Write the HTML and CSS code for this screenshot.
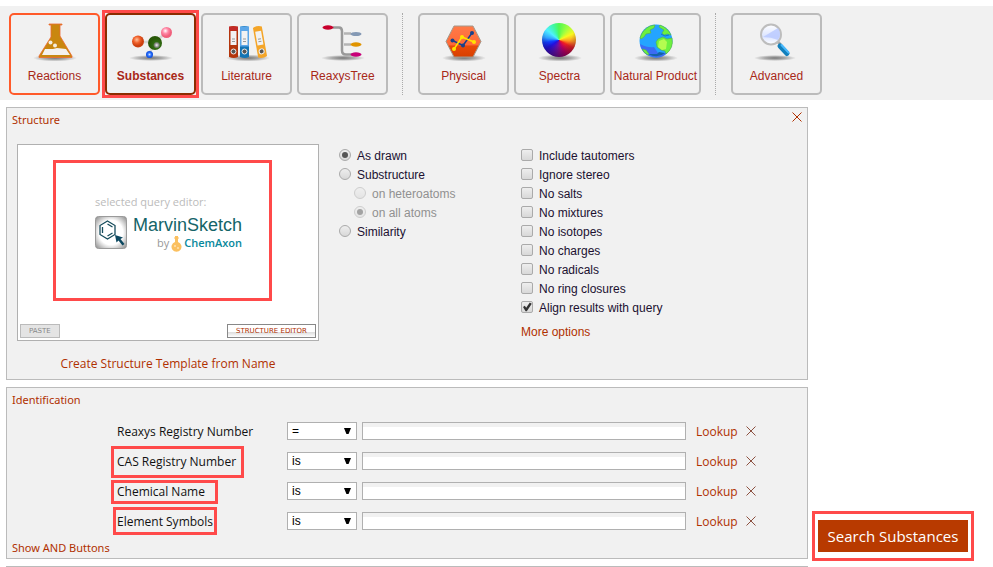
FILE: index.html
```html
<!DOCTYPE html>
<html lang="en">
<head>
<meta charset="utf-8">
<title>Substances</title>
<link rel="stylesheet" href="styles.css">
</head>
<body>
<svg class="defs" width="0" height="0" aria-hidden="true">
  <defs>
    <radialGradient id="shadow"><stop offset="0" stop-color="#777"/><stop offset=".5" stop-color="#aaa"/><stop offset="1" stop-color="#f1f1f1"/></radialGradient>
    <radialGradient id="orange" cx=".4" cy=".35"><stop offset="0" stop-color="#ffc09a"/><stop offset=".55" stop-color="#f0602a"/><stop offset="1" stop-color="#cc4010"/></radialGradient>
    <radialGradient id="green" cx=".62" cy=".65"><stop offset="0" stop-color="#f4f4f4"/><stop offset=".3" stop-color="#888"/><stop offset=".5" stop-color="#2f6a10"/><stop offset="1" stop-color="#285808"/></radialGradient>
    <radialGradient id="pink" cx=".4" cy=".35"><stop offset="0" stop-color="#fff"/><stop offset=".5" stop-color="#ff8aa8"/><stop offset="1" stop-color="#f0607c"/></radialGradient>
    <radialGradient id="blue"><stop offset="0" stop-color="#cfe4ff"/><stop offset=".5" stop-color="#2a70ff"/><stop offset="1" stop-color="#0a4ad8"/></radialGradient>
    <linearGradient id="hex" x2="0" y2="1"><stop offset="0" stop-color="#ff7a48"/><stop offset=".6" stop-color="#ff6a38"/><stop offset=".65" stop-color="#e84a08"/><stop offset="1" stop-color="#d84000"/></linearGradient>
    <linearGradient id="lens" x2="0" y2="1"><stop offset="0" stop-color="#fff"/><stop offset=".6" stop-color="#dbe4ff"/><stop offset="1" stop-color="#fff"/></linearGradient>
    <radialGradient id="tile" r=".7"><stop offset=".55" stop-color="#fff"/><stop offset="1" stop-color="#888"/></radialGradient>
  </defs>
</svg>

<nav class="toolbar" aria-label="Query types">
  <button class="tab tab-linked" type="button">
    <svg class="icon" viewBox="0 0 48 42"><ellipse cx="24" cy="37" rx="22" ry="3.5" fill="url(#shadow)"/><path d="M18 3h13v1h-2v11l12 20v1.500H8V35l12-19V4h-2z" fill="#c98710" stroke="#ee6a32" stroke-width=".8"/><path d="M14 28h8l4-1 9 1 4 6H11z" fill="#f4f1ee"/><circle cx="19.500" cy="21.500" r="2" fill="#f6eee0"/><circle cx="24" cy="24.500" r="2" fill="#f6eee0"/></svg>
    <span>Reactions</span>
  </button>
  <button class="tab tab-active" type="button" aria-pressed="true">
    <svg class="icon" viewBox="0 0 48 42"><ellipse cx="24" cy="37" rx="22" ry="3" fill="url(#shadow)"/><path d="M11 21h17L40 11M28 22l-6 11" stroke="#d4d4d4" stroke-width="2.500" fill="none"/><circle cx="11" cy="20.500" r="6" fill="url(#orange)"/><circle cx="28" cy="22" r="7" fill="url(#green)"/><circle cx="39.500" cy="11.500" r="5.500" fill="url(#pink)"/><circle cx="22.500" cy="33.500" r="3.500" fill="url(#blue)"/></svg>
    <span>Substances</span>
  </button>
  <button class="tab" type="button">
    <svg class="icon" viewBox="0 0 48 42"><ellipse cx="25" cy="37" rx="22" ry="3.500" fill="url(#shadow)"/>
      <g><path d="M6 6q4-2 9 0v30q-4 2-9 0z" fill="#b3350c"/><path d="M6 5.500h9v4H6z" fill="#c22a28"/><path d="M7.500 10h6v14h-6z" fill="#f2f2f2"/><path d="M9 18h3M9 20.500h3" stroke="#999"/><circle cx="10.500" cy="30.500" r="2.500" fill="#555" stroke="#eee"/></g>
      <g><path d="M17 6q4-2 9 0v30q-4 2-9 0z" fill="#1374b4"/><path d="M17 5.500h9v20h-9z" fill="#5ba6e8"/><path d="M18.500 10h6v14h-6z" fill="#f2f2f2"/><path d="M20 18h3M20 20.500h3" stroke="#999"/><circle cx="21.500" cy="30.500" r="2.500" fill="#555" stroke="#eee"/></g>
      <g transform="rotate(-10 37 21)"><path d="M32.500 6q4-2 9 0v30q-4 2-9 0z" fill="#f4a528"/><path d="M34 10h6v14h-6z" fill="#f2f2f2"/><path d="M35.500 18h3M35.500 20.500h3" stroke="#999"/><circle cx="37" cy="30.500" r="2.500" fill="#555" stroke="#eee"/></g></svg>
    <span>Literature</span>
  </button>
  <button class="tab" type="button">
    <svg class="icon" viewBox="0 0 48 42"><ellipse cx="24" cy="37" rx="22" ry="3" fill="url(#shadow)"/><path d="M14 6.500h6q3 0 3 4v19q0 4 4 4h6" fill="none" stroke="#999" stroke-width="2.500"/><path d="M25 12.500h7M25 23.500h7" stroke="#b4b4b4" stroke-width="2.500"/><ellipse cx="9" cy="6.500" rx="5.500" ry="2.200" fill="#c8002c"/><ellipse cx="37" cy="13" rx="5.500" ry="2" fill="#8499b4"/><ellipse cx="37" cy="23.500" rx="5.500" ry="2.200" fill="#e09400"/><ellipse cx="37" cy="33.500" rx="5.500" ry="2.200" fill="#c80078"/></svg>
    <span>ReaxysTree</span>
  </button>
  <span class="divider"></span>
  <button class="tab" type="button">
    <svg class="icon" viewBox="0 0 48 42"><ellipse cx="24" cy="37" rx="22" ry="3.500" fill="url(#shadow)"/><path d="M14 5h19l8 15.500L33 36H14L6 20.500z" fill="url(#hex)" stroke="#a4998c"/><path d="M12.500 19.500L23 24.500l9-12.500" fill="none" stroke="#18428c" stroke-width="1.500"/><path d="M14 28l8-12 12 5" fill="none" stroke="#ffe400" stroke-width="1.500"/><g fill="#18428c"><circle cx="12.500" cy="19.500" r="2"/><circle cx="23" cy="24.500" r="2"/><circle cx="32" cy="12" r="2"/></g><g fill="#ffe400"><circle cx="14" cy="28" r="2"/><circle cx="22" cy="16" r="2"/><circle cx="34" cy="21" r="2"/></g></svg>
    <span>Physical</span>
  </button>
  <button class="tab" type="button">
    <span class="icon wheel-icon"><svg viewBox="0 0 48 42"><ellipse cx="24" cy="37" rx="22" ry="3.500" fill="url(#shadow)"/></svg><i class="wheel"></i></span>
    <span>Spectra</span>
  </button>
  <button class="tab" type="button">
    <svg class="icon" viewBox="0 0 48 42"><ellipse cx="24" cy="37" rx="22" ry="3.500" fill="url(#shadow)"/><circle cx="24" cy="20" r="16.500" fill="#24a4ff"/><path d="M8 23q8 4 14 3l4 6h9q-5 5-11 4.500Q10 35 8 23z" fill="#3c6cf4"/><path d="M16 33q10 5 17-1l-6-1-2 2z" fill="#1464a8"/><path d="M8 17q2-8 10-12l5-1-1 3-4 2 1 3-5 1-2 3-3 2zM28 4q8 3 11 10l-4-1-3 1-2-2 2-3-5-3zM26 18l5-2 4 2 5-1q2 10-6 16l-1-3-4-1-4-3-1-5zM10 28l4 1 3 4-1 1q-4-2-6-6z" fill="#6cf040" stroke="#58a83c" stroke-width=".5"/><path d="M27 20l5-2 3 3-1 7-4 1-4-3z" fill="#b4fc50"/><path d="M29 13l4 2 4-1" stroke="#1478c8" fill="none"/></svg>
    <span>Natural Product</span>
  </button>
  <span class="divider"></span>
  <button class="tab" type="button">
    <svg class="icon" viewBox="0 0 48 42"><ellipse cx="22" cy="37" rx="21" ry="3" fill="url(#shadow)"/><path d="M24 20l4 4" stroke="#aaa" stroke-width="3"/><path d="M27 25l7 7.500" stroke="#1280bc" stroke-width="5" stroke-linecap="round"/><path d="M28.500 24l7 7.500" stroke="#48b8fc" stroke-width="2" stroke-linecap="round"/><circle cx="18" cy="13.500" r="10" fill="url(#lens)" stroke="#bdbdbd" stroke-width="2"/><path d="M10 16L25 7q4 6 0 12-7-3-15-3z" fill="#b8c8ff" opacity=".8"/></svg>
    <span>Advanced</span>
  </button>
</nav>

<main class="page">
  <div class="panels">
    <section class="panel">
      <header class="panel-head">
        <h2>Structure</h2>
        <button class="close" type="button" aria-label="Close structure"><svg viewBox="0 0 10 10"><path d="M.5.500l9 9M9.500.500l-9 9"/></svg></button>
      </header>
      <div class="structure">
        <div class="sketch">
          <div class="editor">
            <div class="preview">
              <p class="hint">selected query editor:</p>
              <div class="brand">
                <svg class="brand-icon" viewBox="0 0 32 33"><rect x=".5" y=".5" width="31" height="32" rx="3" fill="url(#tile)" stroke="#9a9a9a"/><path d="M12.500 5l7.500 4.500v9L12.500 23 5 18.500v-9zM12.500 8l5 3M17.500 17l-5 3M7.500 11v6" fill="none" stroke="#164c5c" stroke-width="1.300"/><path d="M20 19l8 2.500-2.500 1.500 4 5-2 1.500-4-5-2 2z" fill="#0c4860"/></svg>
                <div class="brand-text">
                  <span class="brand-name">MarvinSketch</span>
                  <span class="brand-by">by
                    <svg class="flask" viewBox="0 0 11 16"><path d="M4 0h3v6a5 5 0 1 1-3 0z" fill="#fbc060"/><circle cx="4" cy="10" r="1" fill="#ffe2b0"/><circle cx="7" cy="12" r="1" fill="#ffe2b0"/><path d="M3 2h5" stroke="#fbc060"/></svg>
                    <b>ChemAxon</b></span>
                </div>
              </div>
            </div>
            <div class="editor-actions">
              <button class="mini" type="button" disabled>PASTE</button>
              <button class="mini mini-strong" type="button">STRUCTURE EDITOR</button>
            </div>
          </div>
          <a class="template-link" href="#">Create Structure Template from Name</a>
        </div>
        <div class="options">
          <label><input type="radio" name="mode" checked>As drawn</label>
          <label><input type="radio" name="mode">Substructure</label>
          <label class="sub"><input type="radio" name="atoms" disabled>on heteroatoms</label>
          <label class="sub"><input type="radio" name="atoms" disabled checked>on all atoms</label>
          <label><input type="radio" name="mode">Similarity</label>
        </div>
        <div class="options">
          <label><input type="checkbox">Include tautomers</label>
          <label><input type="checkbox">Ignore stereo</label>
          <label><input type="checkbox">No salts</label>
          <label><input type="checkbox">No mixtures</label>
          <label><input type="checkbox">No isotopes</label>
          <label><input type="checkbox">No charges</label>
          <label><input type="checkbox">No radicals</label>
          <label><input type="checkbox">No ring closures</label>
          <label><input type="checkbox" checked>Align results with query</label>
          <a class="more" href="#">More options</a>
        </div>
      </div>
    </section>

    <section class="panel">
      <header class="panel-head"><h2>Identification</h2></header>
      <div class="fields">
        <div class="field">
          <label for="rrn">Reaxys Registry Number</label>
          <span class="select"><select aria-label="Reaxys Registry Number operator"><option>=</option></select></span>
          <input type="text" id="rrn">
          <a href="#">Lookup</a>
          <button class="close" type="button" aria-label="Remove"><svg viewBox="0 0 10 10"><path d="M.5.500l9 9M9.500.500l-9 9"/></svg></button>
        </div>
        <div class="field">
          <label for="cas" class="mark-tall">CAS Registry Number</label>
          <span class="select"><select aria-label="CAS Registry Number operator"><option>is</option></select></span>
          <input type="text" id="cas">
          <a href="#">Lookup</a>
          <button class="close" type="button" aria-label="Remove"><svg viewBox="0 0 10 10"><path d="M.5.500l9 9M9.500.500l-9 9"/></svg></button>
        </div>
        <div class="field">
          <label for="chem" class="mark-wide">Chemical Name</label>
          <span class="select"><select aria-label="Chemical Name operator"><option>is</option></select></span>
          <input type="text" id="chem">
          <a href="#">Lookup</a>
          <button class="close" type="button" aria-label="Remove"><svg viewBox="0 0 10 10"><path d="M.5.500l9 9M9.500.500l-9 9"/></svg></button>
        </div>
        <div class="field">
          <label for="elem" class="mark-tight">Element Symbols</label>
          <span class="select"><select aria-label="Element Symbols operator"><option>is</option></select></span>
          <input type="text" id="elem">
          <a href="#">Lookup</a>
          <button class="close" type="button" aria-label="Remove"><svg viewBox="0 0 10 10"><path d="M.5.500l9 9M9.500.500l-9 9"/></svg></button>
        </div>
      </div>
      <a class="show-and" href="#">Show AND Buttons</a>
    </section>
    <hr class="next-panel">
  </div>
  <aside class="side">
    <div class="search-frame"><button class="search" type="button">Search Substances</button></div>
  </aside>
</main>
</body>
</html>
```
FILE: styles.css
```css
:root {
  --link: #b03000;
  --line: #bbb;
  --panel: #f1f1f1;
  --mark: #ff4a4a;
  --ui: "Open Sans", sans-serif;
  --head: "Noto Sans", sans-serif;
  --arial: "Liberation Sans", Arial, sans-serif;
}
* { box-sizing: border-box; }
body { margin: 0; background: #fff; color: #111; font: 12px/16px var(--ui); }
button { font: inherit; cursor: pointer; }
a { color: var(--link); text-decoration: none; }
.defs { position: absolute; }

.toolbar { display: flex; gap: 5px; margin-top: 6px; padding: 7px 9px 5px; background: var(--panel); }
.tab {
  position: relative; display: flex; flex-direction: column; align-items: center; gap: 5px;
  width: 91px; height: 82px; padding: 6px 0 0; border: 2px solid var(--line); border-radius: 5px;
  background: var(--panel); color: #a82818; font: 12px/16px var(--arial); white-space: nowrap;
}
.tab-linked { border-color: #ff5a2a; }
.tab-active { border-color: #8c2c00; font-weight: bold; }
.tab-active::after { content: ""; position: absolute; inset: -5px; border: 3px solid var(--mark); }
.icon { display: block; width: 48px; height: 42px; flex: none; }
.wheel-icon { position: relative; }
.wheel-icon svg { display: block; }
.wheel {
  position: absolute; left: 6px; top: 2px; width: 34px; height: 34px; border-radius: 50%;
  background:
    radial-gradient(circle at 50% 25%, transparent 45%, rgba(30, 0, 40, .65) 100%),
    conic-gradient(#50f850, #a0ff40 35deg, #f8f820 65deg, #ff9a20 95deg, #f02020 120deg, #c00060 155deg, #7010a0 190deg, #2010e0 235deg, #1040ff 260deg, #30a0ff 280deg, #50f0ff 310deg, #40f8a0 340deg, #50f850);
}
.divider { margin: 0 10px 0 9px; border-left: 1px dotted #aaa; }

.page { display: grid; grid-template-columns: minmax(0, 1fr) 185px; padding-top: 7px; }
.panels { display: flex; flex-direction: column; gap: 7px; padding-left: 6px; }
.panel { border: 1px solid var(--line); background: var(--panel); }
.panel-head { display: flex; justify-content: space-between; align-items: center; height: 20px; padding: 4px 5px 0; }
.panel-head .close { align-self: flex-start; }
h2 { margin: 0; color: var(--link); font: 11px/16px var(--head); }
.close { padding: 0; border: 0; background: none; width: 10px; height: 10px; }
.close svg { display: block; width: 10px; height: 10px; fill: none; stroke: var(--link); stroke-width: 1; }
.field .close svg { stroke: #8c5040; }

.structure { display: grid; grid-template-columns: 302px 162px minmax(0, 1fr); column-gap: 20px; padding: 16px 10px 7px; }
.sketch { display: flex; flex-direction: column; align-items: center; }
.editor { display: flex; flex-direction: column; justify-content: space-between; width: 100%; height: 197px; padding: 15px 2px 2px; border: 1px solid #b0b0b0; background: #fff; }
.preview { width: 219px; height: 141px; margin-left: 33px; padding: 31px 0 0 39px; border: 3px solid var(--mark); }
.hint { margin: 0 0 6px; color: #bbb; font: 11px/16px var(--ui); }
.brand { display: flex; gap: 6px; }
.brand-icon { width: 32px; height: 33px; }
.brand-text { display: flex; flex-direction: column; align-items: flex-end; }
.brand-name { color: #146468; font: 18px/18px var(--arial); }
.brand-by { display: flex; align-items: flex-end; gap: 2px; color: #999; font: 11px/18px var(--ui); }
.brand-by b { color: #08889c; font-weight: 600; }
.flask { width: 11px; height: 16px; }
.editor-actions { display: flex; justify-content: space-between; }
.mini { height: 14px; padding: 0 8px; border: 1px solid #bbb; background: #e4e4e4; color: #888; font: 7px/12px "DejaVu Sans", sans-serif; }
.mini-strong { border-color: #888; background: linear-gradient(#fff 55%, #ddd 60%, #fff); color: var(--link); }
.template-link { margin-top: 15px; }

.options { display: flex; flex-direction: column; align-items: flex-start; padding-top: 3px; font: 12px/19px var(--arial); color: #201030; }
.options label { display: flex; align-items: flex-start; gap: 6px; }
.options .sub { margin-left: 15px; color: #909090; }
.options input { position: relative; appearance: none; width: 12px; height: 12px; margin: 2px 0 0; border: 1px solid #aaa; border-radius: 2px; background: linear-gradient(#eee, #d8d8d8); }
.options input[type="radio"] { border-radius: 50%; }
.options input[type="radio"]:checked::before { content: ""; position: absolute; inset: 2px; border-radius: 50%; background: #555; }
.options input[type="checkbox"]:checked::before { content: ""; position: absolute; inset: 0; background: #333; clip-path: polygon(10% 50%, 28% 38%, 42% 58%, 78% 5%, 98% 18%, 48% 92%, 36% 92%); }
.options input:disabled { opacity: .5; }
.more { margin-top: 5px; }

.fields { display: flex; flex-direction: column; gap: 12px; padding: 14px 51px 0 110px; }
.field { display: grid; grid-template-columns: 165px 70px minmax(0, 1fr) 50px 10px; column-gap: 5px; align-items: center; height: 18px; }
.field > label, .field > a { padding-top: 2px; }
.field > label { justify-self: start; position: relative; }
.field > a { margin-left: 5px; }
.mark-tall::after, .mark-wide::after, .mark-tight::after { content: ""; position: absolute; border: 3px solid var(--mark); }
.mark-tall::after { inset: -6px -8px -8px -6px; }
.mark-wide::after { inset: -2px -13px -4px -6px; }
.mark-tight::after { inset: -5px -4px; }
.select { position: relative; }
.select::after { content: ""; position: absolute; right: 6px; top: 6px; width: 7px; height: 6px; background: #000; clip-path: polygon(0 0, 100% 0, 65% 100%, 35% 100%); pointer-events: none; }
select, .field input { display: block; width: 100%; height: 18px; margin: 0; border: 1px solid #b0b0b0; border-radius: 0; font: 12px/16px var(--arial); color: #000; }
select { appearance: none; padding: 0 4px; background: #fff; }
.field input { padding: 4px 4px 0; background: linear-gradient(var(--panel) 4px, #fff 4px); }
.show-and { display: block; padding: 10px 5px 2px; font: 11px/16px var(--head); }
.next-panel { width: 100%; margin: 0; border: 0; border-top: 1px solid var(--line); }

.side { display: flex; align-items: flex-end; padding: 0 4px 6px; }
.search-frame { padding: 6px 3px; border: 3px solid var(--mark); }
.search { display: block; width: 150px; height: 32px; padding: 0; border: 0; background: #b83a00; color: #fff; font: 15px/20px var(--ui); white-space: nowrap; }
```
